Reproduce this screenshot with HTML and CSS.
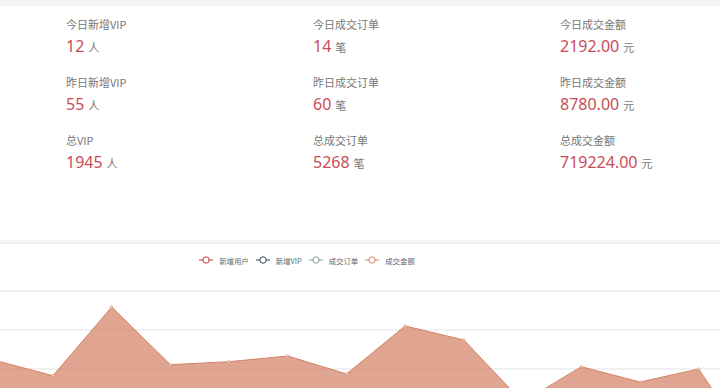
FILE: index.html
```html
<!DOCTYPE html>
<html lang="zh">
<head>
<meta charset="utf-8">
<link rel="stylesheet" href="styles.css">
</head>
<body>
<div class="page">
  <section class="stats">
    <div class="col">
      <div class="item"><div class="label">今日新增VIP</div><div class="value">12<span class="unit">人</span></div></div>
      <div class="item"><div class="label">昨日新增VIP</div><div class="value">55<span class="unit">人</span></div></div>
      <div class="item"><div class="label">总VIP</div><div class="value">1945<span class="unit">人</span></div></div>
    </div>
    <div class="col">
      <div class="item"><div class="label">今日成交订单</div><div class="value">14<span class="unit">笔</span></div></div>
      <div class="item"><div class="label">昨日成交订单</div><div class="value">60<span class="unit">笔</span></div></div>
      <div class="item"><div class="label">总成交订单</div><div class="value">5268<span class="unit">笔</span></div></div>
    </div>
    <div class="col">
      <div class="item"><div class="label">今日成交金额</div><div class="value">2192.00<span class="unit">元</span></div></div>
      <div class="item"><div class="label">昨日成交金额</div><div class="value">8780.00<span class="unit">元</span></div></div>
      <div class="item"><div class="label">总成交金额</div><div class="value">719224.00<span class="unit">元</span></div></div>
    </div>
  </section>
  <section class="chart">
    <div class="legend">
      <div class="lg"><svg class="lg-icon" width="14" height="8" viewBox="0 0 14 8"><line x1="0" y1="4" x2="14" y2="4" stroke="#c23531" stroke-width="1"/><circle cx="7" cy="4" r="3.2" fill="#fff" stroke="#c23531" stroke-width="1"/></svg><span>新增用户</span></div>
      <div class="lg"><svg class="lg-icon" width="14" height="8" viewBox="0 0 14 8"><line x1="0" y1="4" x2="14" y2="4" stroke="#2f4554" stroke-width="1"/><circle cx="7" cy="4" r="3.2" fill="#fff" stroke="#2f4554" stroke-width="1"/></svg><span>新增VIP</span></div>
      <div class="lg"><svg class="lg-icon" width="14" height="8" viewBox="0 0 14 8"><line x1="0" y1="4" x2="14" y2="4" stroke="#8a9aa0" stroke-width="1"/><circle cx="7" cy="4" r="3.2" fill="#fff" stroke="#8a9aa0" stroke-width="1"/></svg><span>成交订单</span></div>
      <div class="lg"><svg class="lg-icon" width="14" height="8" viewBox="0 0 14 8"><line x1="0" y1="4" x2="14" y2="4" stroke="#d48265" stroke-width="1"/><circle cx="7" cy="4" r="3.2" fill="#fff" stroke="#d48265" stroke-width="1"/></svg><span>成交金额</span></div>
    </div>
    <svg class="plot" width="720" height="109" viewBox="0 0 720 109">
      <line x1="0" y1="12" x2="720" y2="12" stroke="#dcdcdc" stroke-width="1"/>
      <line x1="0" y1="51" x2="720" y2="51" stroke="#e3e3e3" stroke-width="1"/>
      <line x1="0" y1="90" x2="720" y2="90" stroke="#e3e3e3" stroke-width="1"/>
      <polygon fill="#d48265" fill-opacity="0.72" points="-5.7,200 -5.7,81.2 53,96.7 111.7,28 170.4,85.7 229,82.7 287.8,77 346.5,95 405.2,47 463.9,61 522.6,123 581.3,87.7 640,103 698.7,90 757.4,178 757.4,200"/>
      <polyline fill="none" stroke="#d48265" stroke-width="1" points="-5.7,81.2 53,96.7 111.7,28 170.4,85.7 229,82.7 287.8,77 346.5,95 405.2,47 463.9,61 522.6,123 581.3,87.7 640,103 698.7,90 757.4,178"/>
      <g fill="#fbeee8" stroke="#d48265" stroke-width="0.6">
        <circle cx="53" cy="96.7" r="1.2"/><circle cx="111.7" cy="28" r="1.2"/><circle cx="170.4" cy="85.7" r="1.2"/><circle cx="229" cy="82.7" r="1.2"/><circle cx="287.8" cy="77" r="1.2"/><circle cx="346.5" cy="95" r="1.2"/><circle cx="405.2" cy="47" r="1.2"/><circle cx="463.9" cy="61" r="1.2"/><circle cx="581.3" cy="87.7" r="1.2"/><circle cx="640" cy="103" r="1.2"/><circle cx="698.7" cy="90" r="1.2"/>
      </g>
    </svg>
  </section>
</div>
</body>
</html>
```

FILE: styles.css
```css
html, body {
  margin: 0;
  padding: 0;
  background: #f4f4f4;
  overflow: hidden;
}
body {
  font-family: "Noto Sans", "Noto Sans CJK SC", sans-serif;
  width: 720px;
  height: 388px;
}
.page {
  display: flex;
  flex-direction: column;
  gap: 3px;
  padding-top: 6px;
}
.stats {
  background: #fff;
  height: 234px;
  box-sizing: border-box;
  padding: 10px 0 0 66px;
  display: grid;
  grid-template-columns: 247px 247px 160px;
}
.item {
  margin-bottom: 15px;
}
.label {
  font-size: 11px;
  line-height: 16px;
  color: #777;
  font-family: "Noto Sans CJK SC", sans-serif;
}
.value {
  margin-top: 2px;
  font-size: 16px;
  line-height: 24px;
  color: #c94c57;
  font-family: "Noto Sans", sans-serif;
}
.unit {
  font-size: 11px;
  color: #777;
  margin-left: 4px;
  font-family: "Noto Sans CJK SC", sans-serif;
}
.chart {
  background: #fff;
  height: 145px;
  box-sizing: border-box;
  padding-top: 10px;
  border-top: 1px solid #ececec;
}
.legend {
  display: flex;
  justify-content: center;
  align-items: center;
  gap: 7px;
  height: 12px;
  padding-right: 106px;
}
.lg {
  display: flex;
  align-items: center;
  gap: 6px;
  font-size: 7.4px;
  color: #666;
  font-family: "Noto Sans CJK SC", sans-serif;
}
.lg-icon {
  display: block;
}
.plot {
  display: block;
  margin-top: 13px;
}
```
